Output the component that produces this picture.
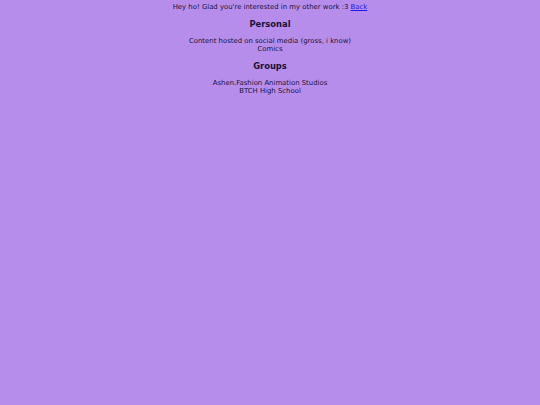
export default function App() {
  return (
    <div
      className="min-h-[405px] w-full bg-[#b78deb] text-center text-[6.9px] leading-[8px] text-[#1a1238] pt-[3px]"
      style={{ fontFamily: '"DejaVu Sans", Verdana, sans-serif' }}
    >
      <p>
        Hey ho! Glad you're interested in my other work :3{' '}
        <a href="#" className="text-[#1a1aee] underline">Back</a>
      </p>

      <h3 className="mt-[8px] mb-[8px] text-[8.4px] leading-[10px] font-bold">Personal</h3>
      <p>Content hosted on social media (gross, i know)</p>
      <p>Comics</p>

      <h3 className="mt-[8px] mb-[8px] text-[8.4px] leading-[10px] font-bold">Groups</h3>
      <p>Ashen.Fashion Animation Studios</p>
      <p>BTCH High School</p>
    </div>
  )
}
